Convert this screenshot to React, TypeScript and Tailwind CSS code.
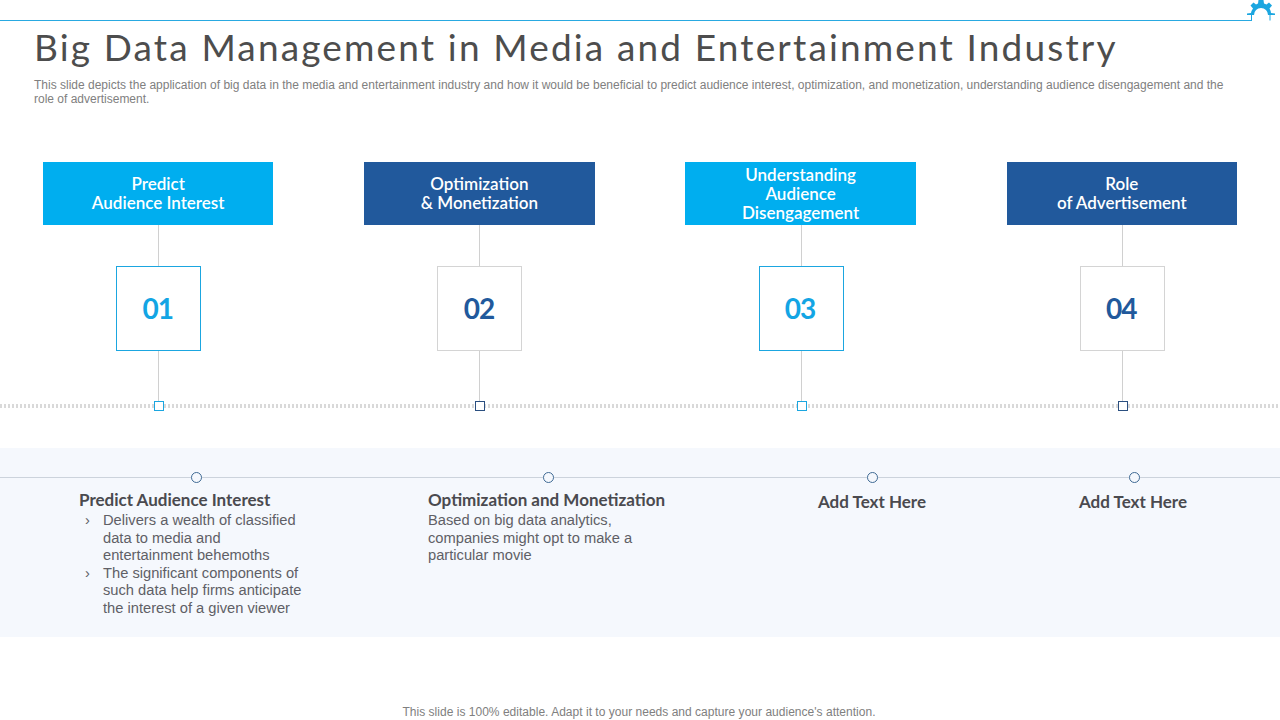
const titleFont = "font-['Lato',sans-serif]";
const bodyFont = "font-['Liberation_Sans',Arial,sans-serif]";

const steps = [
  { num: '01', title: ['Predict', 'Audience Interest'], light: true },
  { num: '02', title: ['Optimization', '& Monetization'], light: false },
  { num: '03', title: ['Understanding', 'Audience', 'Disengagement'], light: true },
  { num: '04', title: ['Role', 'of Advertisement'], light: false },
];

function StepColumn({ step }: { step: (typeof steps)[number] }) {
  return (
    <div className="flex w-[230.4px] flex-col items-center">
      <div
        className={`flex h-[63px] w-full flex-col items-center justify-center pb-[1px] text-[17px] font-semibold leading-[19px] text-white ${titleFont} ${
          step.light ? 'bg-[#00aeef]' : 'bg-[#21599c]'
        }`}
      >
        {step.title.map(line => (
          <div key={line}>{line}</div>
        ))}
      </div>
      <div className="ml-px h-[41px] w-px bg-[#d0d0d0]" />
      <div
        className={`ml-px flex h-[85px] w-[85px] items-center justify-center border bg-white pb-[2px] pr-[2px] text-[28px] font-bold tracking-[-1px] ${titleFont} ${
          step.light ? 'border-[#1ba6e0] text-[#13a5e4]' : 'border-[#d4d4d4] text-[#21599c]'
        }`}
      >
        {step.num}
      </div>
      <div className="ml-px h-[50px] w-px bg-[#d0d0d0]" />
      <div
        className={`relative z-10 ml-[2px] h-[10px] w-[10px] border bg-white ${
          step.light ? 'border-[#1ba6e0]' : 'border-[#2b4f80]'
        }`}
      />
    </div>
  );
}

function Dot() {
  return <div className="h-[11px] w-[11px] rounded-full border border-[#3f6a94] bg-[#f5f8fd]" />;
}

export default function App() {
  return (
    <div className={`h-[720px] w-[1280px] overflow-hidden bg-white ${bodyFont}`}>
      {/* Top rule with gear */}
      <div className="flex h-[21px] items-end">
        <div className="h-px w-[1252px] bg-[#29a9e1]" />
        <svg width="28" height="21" viewBox="0 0 28 21" className="-ml-[5px] shrink-0">
          <path
            d="M0 13.5 L4 13 A10.5 10.5 0 0 1 6 8.5 L3.5 5.5 L6.5 2.5 L9 4.5 A10.5 10.5 0 0 1 11 3.5 L11.5 0 L16.5 0 L17 3.5 A10.5 10.5 0 0 1 19.5 4.5 L22 2.5 L25 5.5 L22.5 8.5 A10.5 10.5 0 0 1 24 13 L28 13.5 L28 15 L21 15 A7 7 0 0 0 7 15 L0 15 Z"
            fill="#1ba6e0"
          />
          <path d="M4.5 15 V20.5 M23 15 V20.5" stroke="#1ba6e0" strokeWidth="1" fill="none" />
        </svg>
      </div>

      {/* Heading */}
      <h1 className={`mt-[4px] pl-[34px] text-[37px] font-normal leading-[44px] tracking-[2.15px] whitespace-nowrap text-[#4d4d4d] ${titleFont}`}>
        Big Data Management in Media and Entertainment Industry
      </h1>
      <p className="mt-[9px] w-[1240px] pl-[34px] text-[12px] leading-[14px] text-[#808080]">
        This slide depicts the application of big data in the media and entertainment industry and how it would be
        beneficial to predict audience interest, optimization, and monetization, understanding audience disengagement
        and the role of advertisement.
      </p>

      {/* Steps */}
      <div className="relative mt-[56px] flex justify-between pl-[43px] pr-[43px]">
        <div className="absolute bottom-[3px] left-0 h-[4px] w-full bg-[repeating-linear-gradient(90deg,#d9d9d9_0_2.5px,transparent_2.5px_4px)]" />
        {steps.map(step => (
          <StepColumn key={step.num} step={step} />
        ))}
      </div>

      {/* Details panel */}
      <div className="relative mt-[37px] flex h-[189px] bg-[#f5f8fd] text-[14.7px] leading-[17.6px] text-[#5f5f66]">
        <div className="absolute left-0 top-[29px] h-px w-full bg-[#ccd3dc]" />

        <div className="relative w-[392px] pt-[24px]">
          <div className="flex justify-center"><Dot /></div>
          <div className="mt-[4px] pl-[79px]">
            <div className={`text-[17px] font-bold leading-[25px] text-[#4a4a4f] ${titleFont}`}>Predict Audience Interest</div>
            <div className="flex">
              <span className="w-[24px] pl-[6px]">›</span>
              <span className="w-[205px]">Delivers a wealth of classified data to media and entertainment behemoths</span>
            </div>
            <div className="flex">
              <span className="w-[24px] pl-[6px]">›</span>
              <span className="w-[205px]">The significant components of such data help firms anticipate the interest of a given viewer</span>
            </div>
          </div>
        </div>

        <div className="relative w-[312px] pt-[24px]">
          <div className="flex justify-center"><Dot /></div>
          <div className="mt-[4px] pl-[36px]">
            <div className={`text-[17px] font-bold leading-[25px] text-[#4a4a4f] ${titleFont}`}>Optimization and Monetization</div>
            <div className="w-[220px]">Based on big data analytics, companies might opt to make a particular movie</div>
          </div>
        </div>

        <div className="relative w-[336px] pt-[24px] text-center">
          <div className="flex justify-center"><Dot /></div>
          <div className={`mt-[9px] text-[17px] font-bold leading-[20px] text-[#4a4a4f] ${titleFont}`}>Add Text Here</div>
        </div>

        <div className="relative w-[188px] pt-[24px] text-center">
          <div className="flex justify-center"><Dot /></div>
          <div className={`mt-[9px] pr-[2px] text-[17px] font-bold leading-[20px] text-[#4a4a4f] ${titleFont}`}>Add Text Here</div>
        </div>
      </div>

      {/* Footer */}
      <div className="mt-[68px] pr-[2px] text-center text-[12px] leading-[14px] tracking-[0.02px] text-[#808080]">
        This slide is 100% editable. Adapt it to your needs and capture your audience's attention.
      </div>
    </div>
  );
}
